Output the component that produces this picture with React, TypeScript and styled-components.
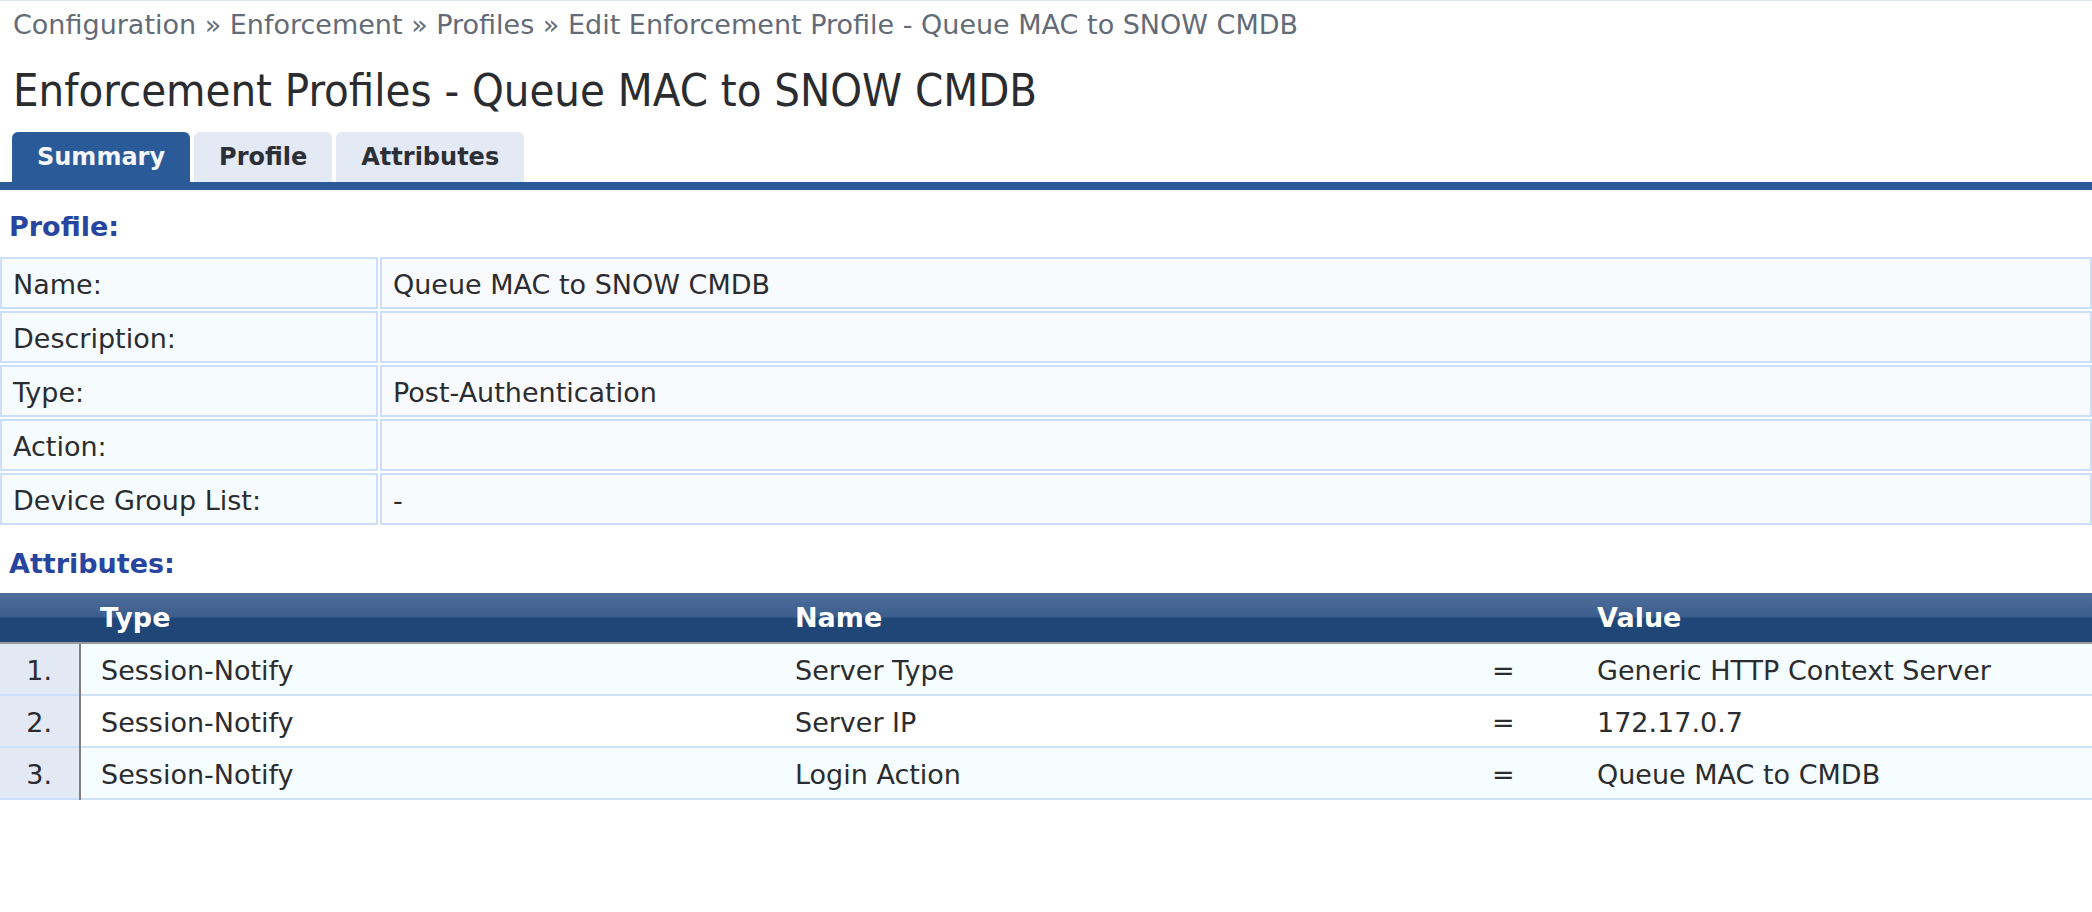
import React from 'react'
import styled, { createGlobalStyle } from 'styled-components'

type ProfileRow = {
	label: string
	value: string
}

type AttributeRow = {
	type: string
	name: string
	value: string
}

const profileRows: ProfileRow[] = [
	{ label: 'Name:', value: 'Queue MAC to SNOW CMDB' },
	{ label: 'Description:', value: '' },
	{ label: 'Type:', value: 'Post-Authentication' },
	{ label: 'Action:', value: '' },
	{ label: 'Device Group List:', value: '-' },
]

const attributes: AttributeRow[] = [
	{ type: 'Session-Notify', name: 'Server Type', value: 'Generic HTTP Context Server' },
	{ type: 'Session-Notify', name: 'Server IP', value: '172.17.0.7' },
	{ type: 'Session-Notify', name: 'Login Action', value: 'Queue MAC to CMDB' },
]

const tabs = ['Summary', 'Profile', 'Attributes']

const App = () => {
	return (
		<Page>
			<GlobalStyle />
			<Breadcrumb>
				Configuration » Enforcement » Profiles » Edit Enforcement Profile - Queue MAC to SNOW CMDB
			</Breadcrumb>
			<Title>Enforcement Profiles - Queue MAC to SNOW CMDB</Title>
			<TabBar>
				{tabs.map((tab, i) => (
					<Tab key={tab} $active={i === 0}>{tab}</Tab>
				))}
			</TabBar>

			<SectionTitle>Profile:</SectionTitle>
			<SummaryTable>
				<tbody>
					{profileRows.map((row) => (
						<tr key={row.label}>
							<LabelCell>{row.label}</LabelCell>
							<ValueCell>{row.value}</ValueCell>
						</tr>
					))}
				</tbody>
			</SummaryTable>

			<SectionTitle>Attributes:</SectionTitle>
			<AttrTable>
				<colgroup>
					<col style={{ width: 80 }} />
					<col style={{ width: 695 }} />
					<col style={{ width: 697 }} />
					<col style={{ width: 105 }} />
					<col />
				</colgroup>
				<thead>
					<tr>
						<HeadCell />
						<HeadCell>Type</HeadCell>
						<HeadCell>Name</HeadCell>
						<HeadCell />
						<HeadCell>Value</HeadCell>
					</tr>
				</thead>
				<tbody>
					{attributes.map((attr, i) => (
						<AttrRow key={attr.name} $odd={i % 2 === 0}>
							<IndexCell>{i + 1}.</IndexCell>
							<AttrCell>{attr.type}</AttrCell>
							<AttrCell>{attr.name}</AttrCell>
							<AttrCell>=</AttrCell>
							<AttrCell>{attr.value}</AttrCell>
						</AttrRow>
					))}
				</tbody>
			</AttrTable>
		</Page>
	)
}

const GlobalStyle = createGlobalStyle`
	html, body {
		margin: 0;
		padding: 0;
		background: #ffffff;
	}
	body {
		font-family: "DejaVu Sans", Verdana, sans-serif;
		color: #2b2c30;
	}
`

const Page = styled.div`
	border-top: 1px solid #dfe7f3;
	min-height: 911px;
`

const Breadcrumb = styled.div`
	padding: 6px 13px 0;
	font-size: 27px;
	line-height: 36px;
	color: #636b77;
	white-space: nowrap;
`

const Title = styled.h1`
	margin: 22px 0 0;
	padding: 0 13px;
	font-family: "DejaVu Sans Condensed", "DejaVu Sans", sans-serif;
	font-stretch: condensed;
	font-size: 45px;
	line-height: 52px;
	font-weight: normal;
	color: #2b2c30;
	white-space: nowrap;
`

const TabBar = styled.div`
	display: flex;
	gap: 4px;
	margin-top: 15px;
	padding-left: 12px;
	border-bottom: 8px solid #2b5a98;
`

const Tab = styled.div<{ $active?: boolean }>`
	height: 50px;
	line-height: 50px;
	padding: 0 25px;
	border-radius: 6px 6px 0 0;
	font-size: 24px;
	font-weight: bold;
	background: ${(p) => (p.$active ? '#2b5a98' : '#e3e9f5')};
	color: ${(p) => (p.$active ? '#f4f6fa' : '#2d2f36')};
`

const SectionTitle = styled.div`
	margin-top: 19px;
	padding-left: 9px;
	font-size: 27px;
	line-height: 36px;
	font-weight: bold;
	color: #2845a0;
`

const SummaryTable = styled.table`
	border-collapse: separate;
	border-spacing: 2px;
	margin: 10px -2px 0;
	width: calc(100% + 4px);
	font-size: 27px;
`

const cellBase = `
	border: 2px solid #cddff8;
	padding: 3px 11px 0;
	line-height: 45px;
	height: 45px;
	text-align: left;
	vertical-align: top;
	white-space: nowrap;
`

const LabelCell = styled.td`
	${cellBase}
	width: 352px;
	background: #f6fcfe;
`

const ValueCell = styled.td`
	${cellBase}
	background: #f9fafe;
`

const AttrTable = styled.table`
	border-collapse: collapse;
	table-layout: fixed;
	width: 100%;
	margin-top: 11px;
	font-size: 27px;
`

const HeadCell = styled.th`
	height: 49px;
	line-height: 49px;
	padding: 0 20px;
	text-align: left;
	font-size: 27px;
	font-weight: bold;
	color: #ffffff;
	background: linear-gradient(to bottom, #4f6e9b 0%, #3c5e8e 48%, #1f4677 52%, #1f4677 100%);
	border-bottom: 2px solid #9a9c9f;
`

const AttrRow = styled.tr<{ $odd?: boolean }>`
	background: ${(p) => (p.$odd ? '#f6fdfe' : '#ffffff')};
	border-bottom: 2px solid #cfe0f8;
`

const AttrCell = styled.td`
	height: 47px;
	line-height: 47px;
	padding: 3px 20px 0;
	vertical-align: top;
	white-space: nowrap;
`

const IndexCell = styled.td`
	height: 47px;
	line-height: 47px;
	padding: 3px 27px 0 0;
	vertical-align: top;
	text-align: right;
	background: #e3e8f5;
	border-right: 2px solid #7d7f83;
`

export default App
